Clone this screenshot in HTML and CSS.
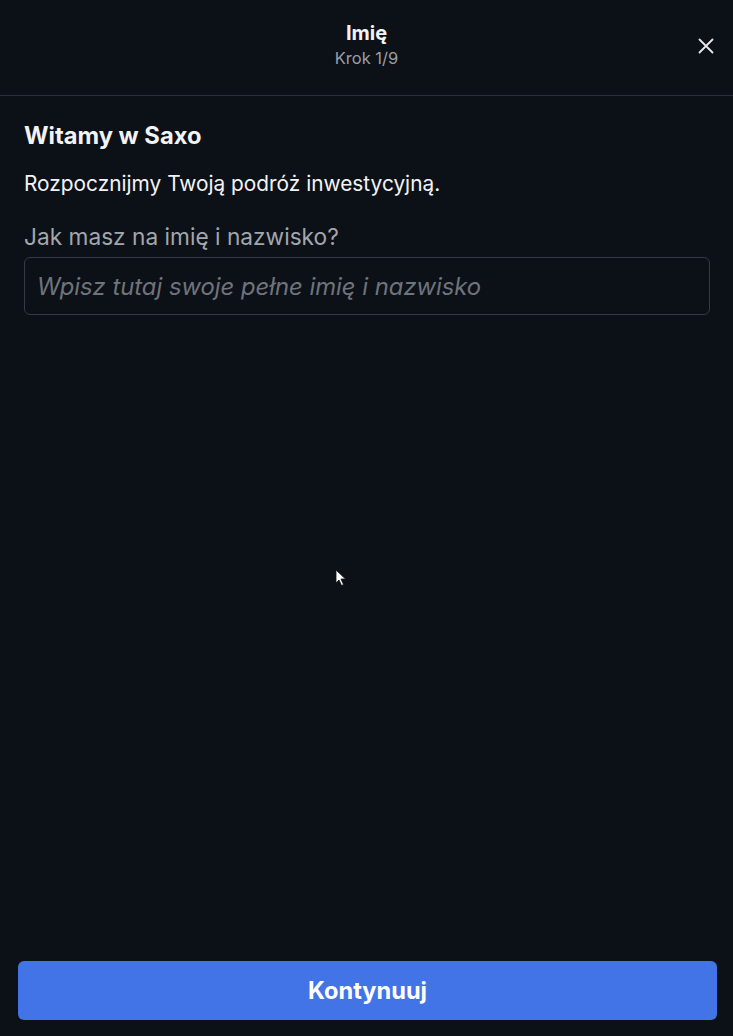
FILE: index.html
```html
<!DOCTYPE html>
<html lang="pl">
<head>
<meta charset="utf-8">
<title>Imię</title>
<link rel="stylesheet" href="styles.css">
</head>
<body>
<div class="page">
  <header class="topbar">
    <div class="spacer"></div>
    <div class="titles">
      <div class="title">Imię</div>
      <div class="step">Krok 1/9</div>
    </div>
    <button class="close" aria-label="Zamknij">
      <svg width="16" height="16" viewBox="0 0 16 16"><path d="M1.5 1.5 L14.5 14.5 M14.5 1.5 L1.5 14.5" stroke="#e6e8eb" stroke-width="1.8" stroke-linecap="round" fill="none"/></svg>
    </button>
  </header>
  <main class="content">
    <h1 class="heading">Witamy w Saxo</h1>
    <p class="lead">Rozpocznijmy Twoją podróż inwestycyjną.</p>
    <label class="label" for="name">Jak masz na imię i nazwisko?</label>
    <input class="field" id="name" type="text" placeholder="Wpisz tutaj swoje pełne imię i nazwisko">
  </main>
  <footer class="footer">
    <button class="primary">Kontynuuj</button>
  </footer>
  <svg class="cursor" width="12" height="18" viewBox="0 0 12 18"><path d="M1 1 L1 14 L4 11 L6.5 16.5 L8.5 15.5 L6 10 L10.5 10 Z" fill="#ffffff" stroke="#111" stroke-width="0.8"/></svg>
</div>
</body>
</html>
```

FILE: styles.css
```css
* { box-sizing: border-box; }
html, body { margin: 0; padding: 0; background: #0c1017; }
body { font-family: Inter, "Noto Sans", sans-serif; color: #f2f3f5; }
.page {
  position: relative;
  width: 733px;
  height: 1036px;
  display: flex;
  flex-direction: column;
  background: #0c1017;
}
.topbar {
  height: 96px;
  border-bottom: 1px solid #2b2f37;
  display: grid;
  grid-template-columns: 1fr auto 1fr;
  align-items: start;
  padding-top: 22px;
}
.titles { text-align: center; }
.title { font-size: 20px; font-weight: 700; line-height: 22px; color: #f2f3f5; }
.step { margin-top: 5px; font-size: 16.5px; line-height: 18px; color: #9a9ea6; }
.close {
  justify-self: end;
  margin: 16px 19px 0 0;
  width: 16px; height: 16px;
  padding: 0; border: 0; background: none;
  display: flex;
}
.content {
  flex: 1;
  padding: 26px 23px 0 24px;
  display: flex;
  flex-direction: column;
}
.heading { margin: 0; font-size: 23.7px; font-weight: 700; line-height: 28px; color: #f2f3f5; }
.lead { margin: 22px 0 0; font-size: 20.85px; line-height: 24px; color: #f2f3f5; }
.label { margin-top: 28px; font-size: 22.7px; line-height: 26px; color: #a2a6ad; }
.field {
  margin-top: 7px;
  height: 58px;
  width: 100%;
  border: 1.5px solid #353a44;
  border-radius: 6px;
  background: #0c1017;
  padding: 0 12px;
  font-family: Inter, "Noto Sans", sans-serif;
  font-size: 23.8px;
  font-style: italic;
  color: #f2f3f5;
  outline: none;
}
.field::placeholder { color: #6f747c; font-style: italic; }
.footer { padding: 0 16px 16px 18px; }
.primary {
  width: 100%;
  height: 59px;
  border: 0;
  border-radius: 6px;
  background: #4274e8;
  color: #ffffff;
  font-family: Inter, "Noto Sans", sans-serif;
  font-size: 23.6px;
  font-weight: 700;
}
.cursor { position: absolute; left: 335px; top: 569px; }
```
